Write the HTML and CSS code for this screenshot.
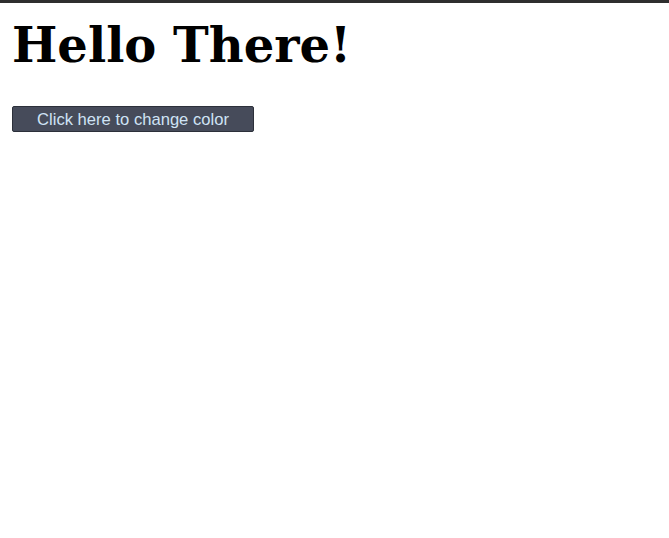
FILE: index.html
```html
<!DOCTYPE html>
<html>
<head>
<meta charset="utf-8">
<link rel="stylesheet" href="styles.css">
</head>
<body>
<div class="topbar"></div>
<main class="page">
<h1 class="title">Hello There!</h1>
<button class="btn">Click here to change color</button>
</main>
</body>
</html>
```
FILE: styles.css
```css
html, body { margin: 0; padding: 0; background: #fff; }
.topbar { height: 3px; background: #2e2e2e; }
.page { padding: 0 12px; }
.title {
  font-family: "DejaVu Serif", serif;
  font-weight: bold;
  font-size: 48px;
  line-height: 1;
  margin: 18px 0 37px;
  color: #000;
}
.btn {
  display: block;
  width: 242px;
  height: 26px;
  padding: 1px 0 0;
  background: #464b5a;
  border: 1px solid #2c303a;
  border-radius: 2px;
  color: #cfe3f5;
  font-family: "Liberation Sans", Arial, sans-serif;
  font-size: 16.6px;
}
```
